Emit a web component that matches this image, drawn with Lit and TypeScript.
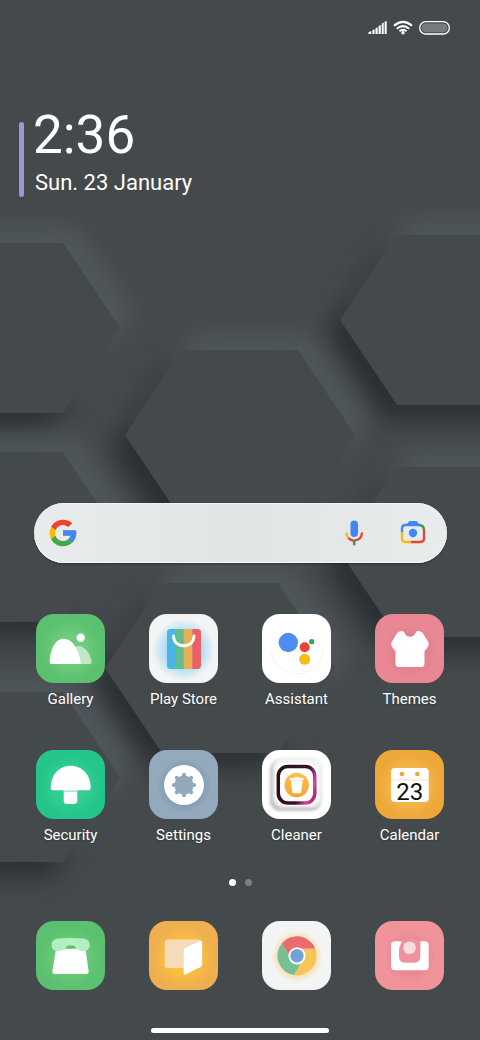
import { LitElement, html, css, svg, type SVGTemplateResult } from "lit";
import { customElement, property } from "lit/decorators.js";

interface App {
  name: string;
  tone: string;
  art: SVGTemplateResult;
}

const HEX_CENTRES = [
  [5, 328],
  [455, 320],
  [240, 435],
  [5, 537],
  [455, 552],
  [220, 668],
  [5, 777],
];

const hexPoints = ([x, y]: number[]) =>
  [
    [-115, 0],
    [-58, -85],
    [58, -85],
    [115, 0],
    [58, 85],
    [-58, 85],
  ]
    .map(([dx, dy]) => `${x + dx},${y + dy}`)
    .join(" ");

const glow = (id: string, color: string, opacity: number) => svg`
  <radialGradient id=${id}>
    <stop offset="0.45" stop-color=${color} stop-opacity=${opacity} />
    <stop offset="1" stop-color=${color} stop-opacity="0" />
  </radialGradient>
  <circle cx="34.5" cy="36" r="31" fill=${`url(#${id})`} />`;

const GALLERY: App = {
  name: "Gallery",
  tone: "green",
  art: svg`
    ${glow("g1", "#8be08f", 0.4)}
    <path d="M36 50 V35 C39 32 42 31.5 45 32.5 C52 35 54.500 42 55.700 48 Q56 50 54 50Z" fill="#c0e8c6" />
    <path d="M15.500 50 Q13.700 50 13.700 48 C14 35 19.500 24.700 27.500 24.700 C37 24.700 42.500 36 44.700 48 Q45 50 43 50Z" fill="#fff" />
    <circle cx="44.700" cy="23.700" r="4.200" fill="#fff" />`,
};

const PLAY: App = {
  name: "Play Store",
  tone: "paper",
  art: svg`
    ${glow("g2", "#7cc8f2", 0.75)}
    <clipPath id="bag"><rect x="18" y="15" width="34" height="40" rx="3.500" /></clipPath>
    <g clip-path="url(#bag)">
      <rect x="18" y="15" width="9" height="40" fill="#4bb4e4" />
      <rect x="26.300" y="15" width="9" height="40" fill="#62bd8f" />
      <rect x="34.700" y="15" width="9" height="40" fill="#e8b055" />
      <rect x="43.300" y="15" width="9" height="40" fill="#ec5f66" />
    </g>
    <path d="M24.500 22 C24.500 35 45 35 45 22" fill="none" stroke="#fff" stroke-width="2.800" stroke-linecap="round" />`,
};

const ASSISTANT: App = {
  name: "Assistant",
  tone: "white",
  art: svg`
    <path d="M8.500 37 A26.500 26.500 0 0 0 61 37" fill="none" stroke="#f1f1f1" stroke-width="0.900" />
    <circle cx="26.300" cy="28.500" r="9.700" fill="#4e8cf0" />
    <circle cx="42.700" cy="33.300" r="5" fill="#ea4438" />
    <circle cx="49.700" cy="27.700" r="2.600" fill="#34a853" />
    <circle cx="42.700" cy="45.300" r="5.500" fill="#f9bb10" />`,
};

const THEMES: App = {
  name: "Themes",
  tone: "rose",
  art: svg`
    <radialGradient id="rs"><stop offset="0.6" stop-color="#d86f80" stop-opacity="0.35" /><stop offset="1" stop-color="#d86f80" stop-opacity="0" /></radialGradient>
    <circle cx="35" cy="37" r="27" fill="url(#rs)" />
    <path d="M22 19.500 C23.500 17 27.500 16 29.300 18.500 C31 21.500 32 22.700 35 22.700 C38 22.700 39 21.500 40.700 18.500 C42.500 16 46.500 17 48 19.500 C50 22.500 52 26 53.500 28.500 C54.500 31 52.500 34.500 49.500 37 V49.500 Q49.500 53 46 53 H24 Q20.500 53 20.500 49.500 V37 C17.500 34.500 15.500 31 16.500 28.500 C18 26 20 22.500 22 19.500Z" fill="#fff" />`,
};

const SECURITY: App = {
  name: "Security",
  tone: "teal",
  art: svg`
    ${glow("g3", "#4ee09a", 0.4)}
    <rect x="27.700" y="36" width="13.600" height="18" rx="3.500" fill="#fff" />
    <rect x="27.700" y="40" width="13.600" height="2" fill="#a8ecca" />
    <path d="M17 40.300 Q14.700 40.300 14.700 38 C14.700 25 23 15.700 34.700 15.700 C46.400 15.700 54.700 25 54.700 38 Q54.700 40.300 52.400 40.300Z" fill="#fff" />`,
};

const SETTINGS: App = {
  name: "Settings",
  tone: "steel",
  art: svg`
    <radialGradient id="ss"><stop offset="0.7" stop-color="#758da4" stop-opacity="0.5" /><stop offset="1" stop-color="#758da4" stop-opacity="0" /></radialGradient>
    <circle cx="35" cy="36" r="27" fill="url(#ss)" />
    <circle cx="35" cy="35" r="20" fill="#fff" />
    <g fill="#93a8ba">
      <circle cx="35" cy="35" r="9.600" />
      ${[0, 45, 90, 135, 180, 225, 270, 315].map(
        (a) => svg`<rect x="33" y="22.800" width="4" height="7" rx="2" transform=${`rotate(${a} 35 35)`} />`,
      )}
    </g>`,
};

const CLEANER: App = {
  name: "Cleaner",
  tone: "white",
  art: svg`
    <defs>
      <linearGradient id="ring" x1="0" y1="0.3" x2="1" y2="0.7">
        <stop offset="0" stop-color="#241019" /><stop offset="0.65" stop-color="#3a1230" /><stop offset="0.9" stop-color="#d9479b" /><stop offset="1" stop-color="#b03079" />
      </linearGradient>
      <linearGradient id="sun" x1="0" y1="0" x2="0" y2="1"><stop offset="0" stop-color="#fcc050" /><stop offset="1" stop-color="#fba32c" /></linearGradient>
      <filter id="soft" x="-20%" y="-20%" width="140%" height="140%"><feGaussianBlur stdDeviation="1.800" /></filter>
    </defs>
    <rect x="8" y="10" width="51" height="51" rx="10" fill="#aaa" opacity="0.75" filter="url(#soft)" />
    <rect x="11" y="7.500" width="49" height="50" rx="10" fill="#f4f4f4" filter="url(#soft)" />
    <rect x="13" y="13" width="43" height="43" rx="12" fill="#fff" />
    <rect x="16.300" y="16.500" width="36.500" height="36.500" rx="9.500" fill="#fff" stroke="url(#ring)" stroke-width="3.500" />
    <circle cx="34.700" cy="35" r="12.200" fill="url(#sun)" />
    <path d="M29.200 30.800 H40.300 L39 42 Q38.800 43 37.800 43 H31.700 Q30.700 43 30.500 42Z M28.200 28.300 H32 L32.800 27.300 H36.700 L37.500 28.300 H41.300 V30 H28.200Z" fill="#fff" stroke="#fff" stroke-width="0.600" />`,
};

const CALENDAR: App = {
  name: "Calendar",
  tone: "amber",
  art: svg`
    ${glow("g4", "#ffcb62", 0.5)}
    <rect x="16" y="18" width="37.700" height="34" rx="4" fill="#fff" />
    <circle cx="27" cy="24" r="2.300" fill="#eda83a" />
    <circle cx="42.300" cy="24" r="2.300" fill="#eda83a" />
    <path d="M16 30 H53.700" stroke="#f8dcb0" stroke-width="1.500" stroke-dasharray="1 0.6" />
    <text class="day" x="34.700" y="50" text-anchor="middle">23</text>`,
};

const PHONE: App = {
  name: "Phone",
  tone: "green",
  art: svg`
    ${glow("g5", "#84dc84", 0.4)}
    <path d="M20 28 H49.500 L52.600 50 Q53 53 50 53 H19 Q16 53 16.400 50Z" fill="#fff" />
    <path d="M22 17.500 Q34.700 16.600 47.500 17.500 C51.500 18 53.700 20.500 53.700 24 C53.700 28 51 30 47.500 30 C43 30 41.500 28 39.700 27.500 Q34.700 26.800 29.700 27.500 C28 28 26.500 30 22 30 C18.500 30 15.700 28 15.700 24 C15.700 20.500 18 18 22 17.500Z" fill="#b3f0c0" />
    <path d="M29.700 27.300 Q30.500 24.600 32.500 24.600 H37 Q39 24.600 39.700 27.300 Q34.700 26.700 29.700 27.300Z" fill="#5bc06f" />`,
};

const FILES: App = {
  name: "File Manager",
  tone: "honey",
  art: svg`
    ${glow("g6", "#ffc637", 0.75)}
    <rect x="15.700" y="18.500" width="37" height="28.500" rx="3" fill="#f5dbb7" />
    <path d="M36 27 L51 20.300 Q53.200 19.500 53.200 22 V43.500 Q53.200 45 51.700 45.800 L36.500 53.500 Q34.700 54.200 34.700 52 V29 Q34.700 27.600 36 27Z" fill="#fff" />`,
};

const CHROME: App = {
  name: "Chrome",
  tone: "paper",
  art: svg`
    <radialGradient id="cs"><stop offset="0.7" stop-color="#f9d9a0" stop-opacity="0.8" /><stop offset="1" stop-color="#f9d9a0" stop-opacity="0" /></radialGradient>
    <circle cx="35" cy="35.500" r="26" fill="url(#cs)" />
    <path d="M19.840 22.540 A19.500 19.500 0 0 1 53.200 27.800 L35 27.800 L28.940 38.300Z" fill="#ea6a70" />
    <path d="M53.200 27.800 A19.500 19.500 0 0 1 32 54.060 L41.060 38.300 L35 27.800Z" fill="#f8c456" />
    <path d="M32 54.060 A19.500 19.500 0 0 1 19.840 22.540 L28.940 38.300 L41.060 38.300Z" fill="#76c193" />
    <circle cx="35" cy="34.800" r="8.600" fill="#fff" />
    <circle cx="35" cy="34.800" r="6.700" fill="#75a0d5" />`,
};

const CAMERA: App = {
  name: "Camera",
  tone: "pink",
  art: svg`
    <radialGradient id="ks"><stop offset="0.6" stop-color="#dd7585" stop-opacity="0.4" /><stop offset="1" stop-color="#dd7585" stop-opacity="0" /></radialGradient>
    <circle cx="35" cy="36" r="26" fill="url(#ks)" />
    <rect x="16" y="20.300" width="37.700" height="29" rx="4" fill="#fff" />
    <path d="M24 20.300 C26 20.300 27 17.300 34.700 17.300 C42.400 17.300 43.500 20.300 45.500 20.300 L45.300 35 Q45.300 41.700 39.300 41.700 H30 Q24 41.700 24 35 V29 C24 25 26.500 23 26.500 20.300Z" fill="#ef929b" />
    <circle cx="34.500" cy="26.700" r="6.300" fill="#fadce2" />`,
};

const APPS = [GALLERY, PLAY, ASSISTANT, THEMES, SECURITY, SETTINGS, CLEANER, CALENDAR];
const DOCK = [PHONE, FILES, CHROME, CAMERA];

@customElement("home-wallpaper")
export class HomeWallpaper extends LitElement {
  static styles = css`
    :host {
      display: block;
    }
    .scene {
      display: block;
      width: 100%;
      height: 100%;
    }
  `;

  render() {
    return html`<svg class="scene" viewBox="0 0 480 1040" preserveAspectRatio="xMidYMid slice" aria-hidden="true">
      <defs>
        <filter id="blur" x="-30%" y="-30%" width="160%" height="160%" color-interpolation-filters="sRGB">
          <feGaussianBlur stdDeviation="13" />
        </filter>
      </defs>
      <rect width="480" height="1040" fill="#44494c" />
      ${HEX_CENTRES.map(
        (c) => svg`<polygon points=${hexPoints(c)} transform="translate(-14 15)" fill="#1e2427" opacity="0.72" filter="url(#blur)" />`,
      )}
      ${HEX_CENTRES.map(
        (c) => svg`<polygon points=${hexPoints(c)} transform="translate(13 -15)" fill="#586065" opacity="0.65" filter="url(#blur)" />`,
      )}
      ${HEX_CENTRES.map((c) => svg`<polygon points=${hexPoints(c)} fill="#44494c" />`)}
    </svg>`;
  }
}

@customElement("app-tile")
export class AppTile extends LitElement {
  @property({ attribute: false }) app!: App;
  @property({ type: Boolean }) bare = false;

  static styles = css`
    :host {
      display: block;
    }
    .tile {
      display: flex;
      flex-direction: column;
      align-items: center;
      gap: 6px;
      width: 100%;
      padding: 0;
      border: 0;
      background: none;
      color: #fff;
      font: 15px/20px Roboto, sans-serif;
      cursor: pointer;
    }
    .face {
      display: block;
      width: 69px;
      height: 69px;
      border-radius: 18px;
    }
    .name {
      text-shadow: 0 1px 2px rgb(0 0 0 / 0.25);
    }
    .green {
      background: #5bc06f;
    }
    .paper {
      background: #f3f5f5;
    }
    .white {
      background: #fff;
    }
    .rose {
      background: #e98894;
    }
    .teal {
      background: #23c58b;
    }
    .steel {
      background: #94a9bb;
    }
    .amber {
      background: #eea83a;
    }
    .honey {
      background: #f0af4f;
    }
    .pink {
      background: #f0939b;
    }
    .day {
      font: 24px Roboto, sans-serif;
      fill: #111;
    }
  `;

  render() {
    const { name, tone, art } = this.app;
    return html`<button class="tile" type="button" aria-label=${name}>
      <svg class="face ${tone}" viewBox="0 0 69 69" aria-hidden="true">${art}</svg>
      ${this.bare ? null : html`<span class="name">${name}</span>`}
    </button>`;
  }
}

@customElement("search-bar")
export class SearchBar extends LitElement {
  static styles = css`
    :host {
      display: block;
    }
    .bar {
      display: flex;
      align-items: center;
      height: 60px;
      box-sizing: border-box;
      padding: 0 19px 0 13px;
      border-radius: 30px;
      background: linear-gradient(90deg, #e9eced, #e1e4e5 50%, #e9eced);
      box-shadow: 0 1px 2px rgb(0 0 0 / 0.35), inset 0 -1px 0 #f6f7f8, inset 0 1px 0 #f1f3f3;
    }
    .query {
      flex: 1;
      min-width: 0;
      border: 0;
      outline: 0;
      background: none;
      color: #303437;
      font: 18px/24px Roboto, sans-serif;
    }
    .action {
      display: flex;
      padding: 0;
      border: 0;
      background: none;
      cursor: pointer;
    }
    .lens {
      margin-left: 33px;
    }
  `;

  render() {
    return html`<form class="bar" role="search">
      <svg width="32" height="32" viewBox="0 0 48 48" aria-hidden="true">
        <path fill="#fbbc05" d="M43.611 20.083H42V20H24v8h11.303c-1.649 4.657-6.080 8-11.303 8-6.627 0-12-5.373-12-12s5.373-12 12-12c3.059 0 5.842 1.154 7.961 3.039l5.657-5.657C34.046 6.053 29.268 4 24 4 12.955 4 4 12.955 4 24s8.955 20 20 20 20-8.955 20-20c0-1.341-.138-2.650-.389-3.917z" />
        <path fill="#ee4236" d="M6.306 14.691l6.571 4.819C14.655 15.108 18.961 12 24 12c3.059 0 5.842 1.154 7.961 3.039l5.657-5.657C34.046 6.053 29.268 4 24 4 16.318 4 9.656 8.337 6.306 14.691z" />
        <path fill="#42a84b" d="M24 44c5.166 0 9.860-1.977 13.409-5.192l-6.190-5.238C29.211 35.091 26.715 36 24 36c-5.202 0-9.619-3.317-11.283-7.946l-6.522 5.025C9.505 39.556 16.227 44 24 44z" />
        <path fill="#4386f5" d="M43.611 20.083H42V20H24v8h11.303c-.792 2.237-2.231 4.166-4.087 5.571l6.193 5.238C36.971 39.205 44 34 44 24c0-1.341-.138-2.650-.389-3.917z" />
      </svg>
      <input class="query" type="search" aria-label="Search" />
      <button class="action" type="button" aria-label="Voice search">
        <svg width="22" height="28" viewBox="0 0 22 28">
          <rect x="7.500" y="1.500" width="7.500" height="16.500" rx="3.700" fill="#4386f5" />
          <path d="M3.500 13.500 Q3.500 17.500 6 19.500" fill="none" stroke="#f9b90c" stroke-width="2.200" />
          <path d="M5.400 19 Q7.500 21.500 11.200 21.500 Q19 21 19 13.500" fill="none" stroke="#ea4335" stroke-width="2.200" />
          <path d="M11.200 21.500 V26.300" stroke="#34a04c" stroke-width="2.600" />
        </svg>
      </button>
      <button class="action lens" type="button" aria-label="Search by image">
        <svg width="30" height="28" viewBox="0 0 30 28">
          <g fill="none" stroke-width="2.300">
            <path d="M4 13 V9.500 Q4 6 7.500 6 H21" stroke="#4386f5" />
            <path d="M20.500 6 Q26 6 26 11" stroke="#34a04c" />
            <path d="M26 10.500 V19.500 Q26 23 22.500 23 H13" stroke="#ea4335" />
            <path d="M4 13 V19.500 Q4 23 7.500 23 H13" stroke="#f9b90c" />
          </g>
          <path d="M8.500 6 L11.500 2.500 H18.500 L21.500 6Z" fill="#4386f5" stroke="#4386f5" stroke-linejoin="round" />
          <circle cx="15" cy="14" r="4.200" fill="#4386f5" />
        </svg>
      </button>
    </form>`;
  }
}

@customElement("app-root")
export class AppRoot extends LitElement {
  static styles = css`
    :host {
      display: flex;
      flex-direction: column;
      position: relative;
      isolation: isolate;
      min-height: 100vh;
      box-sizing: border-box;
      overflow: hidden;
      padding-bottom: 7px;
      background: #44494c;
      color: #fff;
      font-family: Roboto, sans-serif;
    }
    .wallpaper {
      position: absolute;
      inset: 0;
      z-index: -1;
    }
    .status {
      display: flex;
      justify-content: flex-end;
      align-items: center;
      gap: 6px;
      padding: 20px 30px 0 0;
    }
    .clock {
      display: flex;
      align-items: flex-end;
      gap: 9px;
      margin-top: 71px;
      padding-left: 19px;
    }
    .accent {
      width: 5px;
      height: 75px;
      border-radius: 3px;
      background: #9b98d8;
    }
    .time {
      display: block;
      font-size: 53px;
      line-height: 56px;
    }
    .date {
      display: block;
      font-size: 22px;
      line-height: 28px;
      padding: 6px 0 0 2px;
    }
    .search {
      margin: auto 33px 0 34px;
    }
    .apps,
    .dock {
      display: grid;
      grid-template-columns: repeat(4, 1fr);
      row-gap: 41px;
      padding: 0 14px;
    }
    .apps {
      margin-top: 51px;
    }
    .pages {
      display: flex;
      justify-content: center;
      gap: 9px;
      margin-top: 34px;
    }
    .page {
      width: 7px;
      height: 7px;
      border-radius: 50%;
      background: #7d8184;
    }
    .current {
      background: #fff;
    }
    .dock {
      margin-top: 35px;
    }
    .handle {
      align-self: center;
      width: 37%;
      height: 5px;
      margin-top: 38px;
      border-radius: 3px;
      background: #fff;
    }
  `;

  render() {
    return html`
      <home-wallpaper class="wallpaper"></home-wallpaper>
      <header class="status">
        <svg width="20" height="16" viewBox="0 0 20 16" role="img" aria-label="Signal">
          <path d="M1.500 14 V12.300 L4.200 11 V14Z M5.400 14 V10.300 L7.600 9.300 V14Z M8.500 14 V8.300 L10.700 7.200 V14Z M11.600 14 V6 L13.800 5 V14Z M14.700 14 V3.500 L16.700 2.500 V14Z M17.600 14 V1.800 L19.700 1 V14Z" fill="#fff" />
        </svg>
        <svg width="20" height="16" viewBox="0 0 20 16" role="img" aria-label="Wi-Fi">
          <g fill="none" stroke="#fff" stroke-width="2">
            <path d="M1 5.700 Q10 -2 19 5.700" />
            <path d="M3.800 8.700 Q10 3.500 16.200 8.700" />
            <path d="M6.500 11.300 Q10 8.300 13.500 11.300" />
          </g>
          <circle cx="10" cy="12.800" r="1.700" fill="#fff" />
        </svg>
        <svg width="31" height="16" viewBox="0 0 31 16" role="img" aria-label="Battery">
          <rect x="0.700" y="1.700" width="29.600" height="12.300" rx="6" fill="none" stroke="#fff" stroke-width="1.300" />
          <rect x="2.500" y="3.500" width="26" height="8.700" rx="4.200" fill="#777b7e" />
        </svg>
      </header>
      <section class="clock">
        <div class="accent"></div>
        <div>
          <time class="time">2:36</time>
          <time class="date">Sun. 23 January</time>
        </div>
      </section>
      <search-bar class="search"></search-bar>
      <main class="apps">${APPS.map((app) => html`<app-tile .app=${app}></app-tile>`)}</main>
      <div class="pages"><span class="page current"></span><span class="page"></span></div>
      <nav class="dock">${DOCK.map((app) => html`<app-tile .app=${app} bare></app-tile>`)}</nav>
      <div class="handle"></div>
    `;
  }
}
